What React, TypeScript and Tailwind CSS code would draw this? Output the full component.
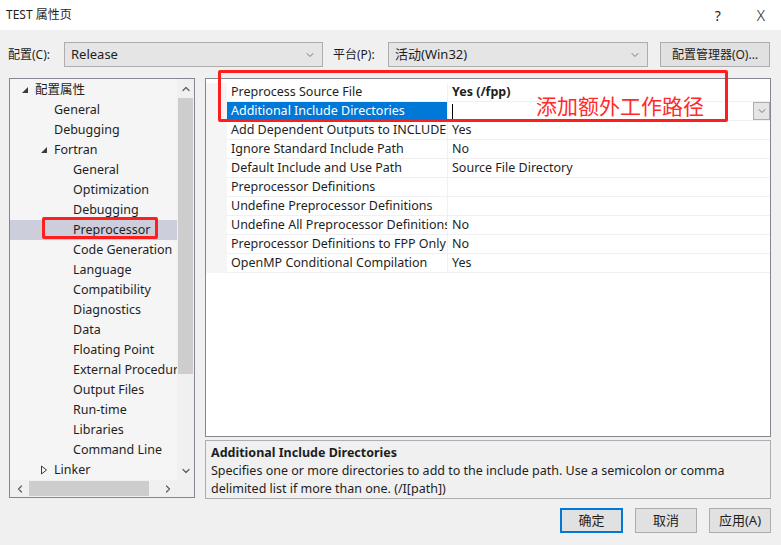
import { ChevronDown, ChevronLeft, ChevronRight, ChevronUp } from "lucide-react";

const font = { fontFamily: '"Noto Sans", "Noto Sans CJK SC", sans-serif' };

type TreeItem = { label: string; level: number; arrow?: "open" | "closed"; selected?: boolean };

const treeItems: TreeItem[] = [
  { label: "配置属性", level: 0, arrow: "open" },
  { label: "General", level: 1 },
  { label: "Debugging", level: 1 },
  { label: "Fortran", level: 1, arrow: "open" },
  { label: "General", level: 2 },
  { label: "Optimization", level: 2 },
  { label: "Debugging", level: 2 },
  { label: "Preprocessor", level: 2, selected: true },
  { label: "Code Generation", level: 2 },
  { label: "Language", level: 2 },
  { label: "Compatibility", level: 2 },
  { label: "Diagnostics", level: 2 },
  { label: "Data", level: 2 },
  { label: "Floating Point", level: 2 },
  { label: "External Procedures", level: 2 },
  { label: "Output Files", level: 2 },
  { label: "Run-time", level: 2 },
  { label: "Libraries", level: 2 },
  { label: "Command Line", level: 2 },
  { label: "Linker", level: 1, arrow: "closed" },
];

const props: [string, string, boolean?][] = [
  ["Preprocess Source File", "Yes (/fpp)", true],
  ["Additional Include Directories", ""],
  ["Add Dependent Outputs to INCLUDE", "Yes"],
  ["Ignore Standard Include Path", "No"],
  ["Default Include and Use Path", "Source File Directory"],
  ["Preprocessor Definitions", ""],
  ["Undefine Preprocessor Definitions", ""],
  ["Undefine All Preprocessor Definitions", "No"],
  ["Preprocessor Definitions to FPP Only", "No"],
  ["OpenMP Conditional Compilation", "Yes"],
];

function Combo({ value, width }: { value: string; width: string }) {
  return (
    <div className={`flex h-[25px] items-center justify-between border border-[#adadad] bg-[#e5e5e5] pl-[6px] pr-[6px] ${width}`}>
      <span>{value}</span>
      <ChevronDown className="h-3 w-3 text-[#555]" strokeWidth={1.5} />
    </div>
  );
}

function Arrow({ kind }: { kind: "open" | "closed" }) {
  if (kind === "open")
    return (
      <svg width="8" height="8" viewBox="0 0 8 8">
        <polygon points="7,1 7,7 1,7" fill="#3c3c3c" />
      </svg>
    );
  return (
    <svg width="8" height="10" viewBox="0 0 8 10">
      <polygon points="1.5,1 6.5,5 1.5,9" fill="none" stroke="#3c3c3c" strokeWidth="1" />
    </svg>
  );
}

export default function App() {
  return (
    <div className="relative h-[545px] w-[781px] overflow-hidden bg-[#f0f0f0] text-[13px] text-[#1e1e1e]" style={font}>
      {/* title bar */}
      <div className="flex h-[30px] items-center justify-between bg-white pl-[6px] pr-[16px] text-[12px]">
        <span>TEST 属性页</span>
        <div className="flex items-center gap-[36px] text-[14px]">
          <span>?</span>
          <span className="text-[15px] font-light">X</span>
        </div>
      </div>

      {/* top combos */}
      <div className="mt-[12px] flex items-center pl-[8px]">
        <span className="w-[56px] text-[12px]">配置(C):</span>
        <Combo value="Release" width="w-[259px]" />
        <span className="ml-[10px] w-[55px] text-[12px]">平台(P):</span>
        <Combo value="活动(Win32)" width="w-[260px]" />
        <div className="ml-[12px] flex h-[25px] w-[110px] items-center justify-center border border-[#adadad] bg-[#e1e1e1] text-[12px]">
          配置管理器(O)...
        </div>
      </div>

      <div className="mt-[11px] flex pl-[9px]">
        {/* tree */}
        <div className="flex h-[420px] w-[186px] flex-col border border-[#828790] bg-[#f5f5f5]">
          <div className="flex min-h-0 flex-1">
            <div className="flex-1 overflow-hidden pt-[1px] text-[12.5px]">
              {treeItems.map((t, i) => (
                <div
                  key={i}
                  className={`flex h-[20px] items-center whitespace-nowrap ${t.selected ? "bg-[#cccedb]" : ""}`}
                  style={{ paddingLeft: 25 + t.level * 19 - (t.arrow ? 14 : 0) }}
                >
                  {t.arrow && (
                    <span className="flex w-[14px] items-center">
                      <Arrow kind={t.arrow} />
                    </span>
                  )}
                  <span>{t.label}</span>
                </div>
              ))}
            </div>
            <div className="flex w-[17px] flex-col items-center bg-[#f0f0f0]">
              <div className="flex h-[19px] items-center">
                <ChevronUp className="h-3 w-3 text-[#606060]" strokeWidth={2.5} />
              </div>
              <div className="h-[276px] w-[15px] bg-[#cdcdcd]" />
              <div className="flex-1" />
              <div className="flex h-[19px] items-center">
                <ChevronDown className="h-3 w-3 text-[#606060]" strokeWidth={2.5} />
              </div>
            </div>
          </div>
          <div className="flex h-[17px] items-center bg-[#f0f0f0] pr-[17px]">
            <div className="flex w-[19px] justify-center">
              <ChevronLeft className="h-3 w-3 text-[#606060]" strokeWidth={2.5} />
            </div>
            <div className="h-[15px] w-[120px] bg-[#cdcdcd]" />
            <div className="flex-1" />
            <div className="flex w-[19px] justify-center">
              <ChevronRight className="h-3 w-3 text-[#606060]" strokeWidth={2.5} />
            </div>
          </div>
        </div>

        {/* right side */}
        <div className="ml-[10px] flex w-[566px] flex-col">
          <div className="h-[359px] border border-[#828790] bg-white pt-[4px] text-[12.5px]">
            <div className="flex">
              <div className="w-[21px] self-stretch bg-[#f5f5f5]" />
              <div className="flex-1">
                {props.map(([name, value, bold], i) => (
                  <div key={i} className="flex h-[19px] items-center border-b border-[#f0f0f0]">
                    <div
                      className={`flex h-full w-[221px] items-center overflow-hidden whitespace-nowrap border-r border-[#f0f0f0] pl-[4px] ${
                        i === 1 ? "bg-[#0078d7] text-white" : ""
                      }`}
                    >
                      {name}
                    </div>
                    <div className={`flex h-full flex-1 items-center pl-[4px] ${bold ? "font-bold" : ""}`}>
                      {i === 1 ? (
                        <div className="flex w-full items-center justify-between">
                          <span className="h-[15px] w-px bg-black" />
                          <span className="flex h-[18px] w-[17px] items-center justify-center border border-[#adadad] bg-[#e5e5e5]">
                            <ChevronDown className="h-3 w-3 text-[#555]" strokeWidth={1.5} />
                          </span>
                        </div>
                      ) : (
                        value
                      )}
                    </div>
                  </div>
                ))}
              </div>
            </div>
          </div>

          <div className="mt-[3px] h-[59px] border border-[#adadad] bg-[#f0f0f0] px-[5px] pt-[3px] text-[12.5px] leading-[18px]">
            <div className="font-bold">Additional Include Directories</div>
            <div>Specifies one or more directories to add to the include path. Use a semicolon or comma</div>
            <div>delimited list if more than one. (/I[path])</div>
          </div>

          <div className="mt-[9px] flex justify-end gap-[12px] text-[13px]">
            <div className="flex h-[25px] w-[63px] items-center justify-center border-2 border-[#0078d7] bg-[#e1e1e1]">确定</div>
            <div className="flex h-[25px] w-[62px] items-center justify-center border border-[#adadad] bg-[#e1e1e1]">取消</div>
            <div className="flex h-[25px] w-[62px] items-center justify-center border border-[#adadad] bg-[#e1e1e1]">应用(A)</div>
          </div>
        </div>
      </div>

      {/* red annotations */}
      <div className="absolute left-[42px] top-[217px] h-[22px] w-[116px] rounded-[2px] border-[3px] border-[#ff1e1e]" />
      <div className="absolute left-[218px] top-[70px] h-[52px] w-[510px] rounded-[2px] border-[3px] border-[#ff1e1e]" />
      <div className="absolute left-[536px] top-[93px] text-[21px] leading-[26px] text-[#ff2a2a]">添加额外工作路径</div>
    </div>
  );
}
